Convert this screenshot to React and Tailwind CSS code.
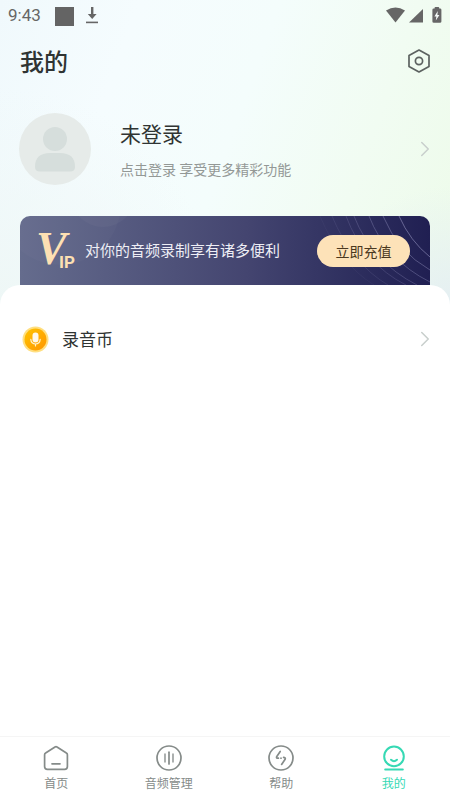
import { ChevronRight } from "lucide-react";

const tabs = [
  { label: "首页", icon: HomeIcon },
  { label: "音频管理", icon: AudioIcon },
  { label: "帮助", icon: HelpIcon },
  { label: "我的", icon: MineIcon, active: true },
];

function HomeIcon() {
  return (
    <svg className="w-7 h-7" viewBox="0 0 28 28" fill="none" stroke="currentColor" strokeWidth="1.7" strokeLinecap="round" strokeLinejoin="round">
      <path d="M13 3 Q14 2.4 15 3 L24.4 9 Q25.4 9.6 25.4 10.8 V22.6 Q25.4 25.4 22.6 25.4 H5.4 Q2.6 25.4 2.6 22.6 V10.8 Q2.6 9.6 3.6 9 Z" />
      <path d="M10 19.8 H18" />
    </svg>
  );
}

function AudioIcon() {
  return (
    <svg className="w-7 h-7" viewBox="0 0 28 28" fill="none" stroke="currentColor" strokeWidth="1.7" strokeLinecap="round">
      <circle cx="14" cy="14" r="12" />
      <path d="M14 8.2 V20" />
      <path d="M10 10.2 V17.8 M18 10.2 V17.8" opacity="0.8" />
    </svg>
  );
}

function HelpIcon() {
  return (
    <svg className="w-7 h-7" viewBox="0 0 28 28" fill="none" stroke="currentColor" strokeWidth="1.7" strokeLinecap="round" strokeLinejoin="round">
      <circle cx="14" cy="14" r="12" />
      <path d="M13.2 7.4 L9.8 12.4 Q9 14 10.4 14.2 L11.4 14.2" />
      <path d="M14.6 20.4 L18 15.6 Q18.8 14 17.4 13.6 L16.6 13.4" />
      <path d="M14 14 V14.2" />
    </svg>
  );
}

function MineIcon() {
  return (
    <svg className="w-7 h-7" viewBox="0 0 28 28" fill="none" stroke="currentColor" strokeWidth="2" strokeLinecap="round">
      <circle cx="14" cy="12.4" r="9.8" />
      <path d="M11 15.8 Q14 18.6 17 15.8" />
      <path d="M5.2 25.6 H22.8" />
    </svg>
  );
}

function StatusBar() {
  return (
    <div className="flex items-center justify-between h-8 px-2 text-[#666]">
      <div className="flex items-center">
        <span className="w-[47px] text-[17px] font-[Roboto,sans-serif]">9:43</span>
        <span className="w-[19px] h-[19px] bg-[#646464]" />
        <svg className="w-3 h-[18px] ml-3" viewBox="0 0 12 18" fill="currentColor">
          <path d="M5 0 H7.4 V7 H10.6 L6.2 12 L1.8 7 H5 Z" />
          <path d="M0 14.6 H12 V16.2 H0 Z" />
        </svg>
      </div>
      <svg className="w-14 h-[18px]" viewBox="0 0 56 18" fill="currentColor">
        <path d="M0 3.4 Q9.5 -2.6 19 3.4 L9.5 15.4 Z" />
        <path d="M37 2 V15.4 H23 Z" />
        <path d="M48.6 1.4 V0.8 Q48.6 0 49.4 0 H52.4 Q53.2 0 53.2 0.8 V1.4 H54 Q55.4 1.4 55.4 2.8 V14.6 Q55.4 15.8 54 15.8 H47.8 Q46.4 15.8 46.4 14.6 V2.8 Q46.4 1.4 47.8 1.4 Z" />
        <path d="M51.8 4 L48.4 9.4 H50.4 L49.8 13.4 L53.4 8 H51.4 Z" fill="#f5fbf8" />
      </svg>
    </div>
  );
}

function VipBanner() {
  return (
    <section className="relative overflow-hidden flex items-center justify-between h-[69px] mx-5 px-5 rounded-t-[10px] bg-linear-to-r from-[#656c8d] via-[#444570] via-55% to-[#201f52]">
      <svg className="absolute right-0 top-0 w-32 h-[69px]" viewBox="0 0 128 69" fill="none" stroke="#8d8cb8" strokeWidth="0.8">
        <path d="M97 0 Q108 25 128 41" opacity="0.8" />
        <path d="M81 0 Q96 36 128 54" opacity="0.6" />
        <path d="M67 0 Q84 44 128 66" opacity="0.5" />
        <path d="M52 0 Q70 46 115 69" opacity="0.4" />
        <path d="M44 0 Q62 48 104 69" opacity="0.3" />
        <path d="M30 0 Q50 48 86 69" opacity="0.2" />
        <path d="M18 0 Q38 48 72 69" opacity="0.1" />
      </svg>
      <svg className="absolute left-0 top-0 w-28 h-[69px]" viewBox="0 0 112 69" fill="#ffffff">
        <circle cx="40" cy="-12" r="61" opacity="0.02" />
        <circle cx="83" cy="-22" r="33" opacity="0.03" />
      </svg>
      <div className="relative flex items-center">
        <svg className="w-9 h-9 mr-[9px] overflow-visible" viewBox="0 0 36 36" fill="#fde0b3">
          <text x="-4" y="31" className="text-[46px] font-bold italic font-['Liberation_Serif',serif]">
            V
            <tspan x="19" y="35" className="text-[17px] not-italic font-[Roboto,sans-serif]">IP</tspan>
          </text>
        </svg>
        <p className="text-[15px] text-[#eeeef5]">对你的音频录制享有诸多便利</p>
      </div>
      <button className="relative w-[93px] h-8 rounded-full bg-[#fde2b8] text-sm text-[#4a3820]">
        立即充值
      </button>
    </section>
  );
}

export default function App() {
  return (
    <div className="flex flex-col min-h-screen bg-white text-[#2f3433] font-['Noto_Sans_CJK_SC',sans-serif]">
      <header className="pb-5 bg-[radial-gradient(circle_at_100%_100%,#e5eff3_0%,#e5eff300_22%),radial-gradient(circle_at_0%_100%,#eef7f6_0%,#eef7f600_40%),linear-gradient(110deg,#f0f9fc_0%,#f5fcfe_25%,#f4fdfc_50%,#f1fcf2_75%,#edfbe9_100%)]">
        <StatusBar />

        <div className="flex items-center justify-between h-[58px] pl-5 pr-[19px]">
          <h1 className="text-2xl leading-8 font-medium">我的</h1>
          <button aria-label="设置" className="text-[#5c6260]">
            <svg className="w-6 h-6" viewBox="0 0 24 24" fill="none" stroke="currentColor" strokeWidth="1.7" strokeLinejoin="round">
              <path d="M12 1 L22 6.4 V17.6 L12 23 L2 17.6 V6.4 Z" />
              <circle cx="12" cy="12" r="3.6" />
            </svg>
          </button>
        </div>

        {/* Profile */}
        <a href="#login" className="flex items-center pt-[23px] pb-[31px] pl-[19px] pr-3">
          <svg className="w-[72px] h-[72px]" viewBox="0 0 72 72">
            <circle cx="36" cy="36" r="36" fill="#e6ebe9" />
            <circle cx="36" cy="26" r="12" fill="#d6dedc" />
            <path d="M16 54 Q16 40 31 40 H41 Q56 40 56 54 Q56 58.5 51 58.5 H21 Q16 58.5 16 54 Z" fill="#d6dedc" />
          </svg>
          <div className="flex-1 ml-[29px]">
            <p className="text-[21px] leading-7">未登录</p>
            <p className="mt-3 text-sm leading-5 text-[#939896]">点击登录 享受更多精彩功能</p>
          </div>
          <ChevronRight className="w-[26px] h-[26px] text-[#c9cfcd]" strokeWidth={1.4} />
        </a>

        <VipBanner />
      </header>

      <main className="relative flex-1 -mt-5 pt-7 rounded-t-[20px] bg-white">
        <a href="#coins" className="flex items-center h-[52px] pl-[22px] pr-3">
          <svg className="w-[27px] h-[27px]" viewBox="0 0 27 27">
            <defs>
              <linearGradient id="coin" x1="0" y1="0" x2="1" y2="1">
                <stop offset="0" stopColor="#ffc400" />
                <stop offset="1" stopColor="#ff9500" />
              </linearGradient>
            </defs>
            <circle cx="13.5" cy="13.5" r="13" fill="#ffdf80" />
            <circle cx="13.5" cy="13.5" r="11" fill="url(#coin)" />
            <rect x="10.5" y="6.5" width="6" height="10" rx="3" fill="#fff8e8" />
            <path d="M8.8 13.4 Q9.2 18 13.5 18 Q17.8 18 18.2 13.4 M13.5 18 V20" fill="none" stroke="#fff1cc" strokeWidth="1.2" strokeLinecap="round" />
          </svg>
          <span className="flex-1 ml-[13px] text-[17px]">录音币</span>
          <ChevronRight className="w-[26px] h-[26px] text-[#c9cfcd]" strokeWidth={1.4} />
        </a>
      </main>

      <nav className="grid grid-cols-4 h-16 border-t border-[#f5f5f5] bg-white">
        {tabs.map(({ label, icon: Icon, active }) => (
          <button
            key={label}
            className={`flex flex-col items-center pt-[7px] ${active ? "text-[#36d9b4]" : "text-[#858b89]"}`}
          >
            <Icon />
            <span className="text-xs leading-5 mt-px">{label}</span>
          </button>
        ))}
      </nav>
    </div>
  );
}
